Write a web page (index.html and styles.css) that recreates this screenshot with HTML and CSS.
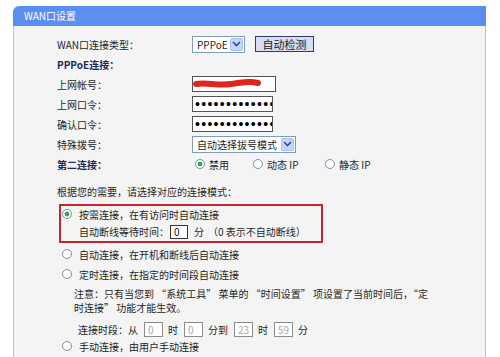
FILE: index.html
```html
<!DOCTYPE html>
<html lang="zh-CN">
<head>
    <meta charset="UTF-8">
    <meta name="viewport" content="width=device-width, initial-scale=1.0">
    <link rel="stylesheet" href="styles.css">
    <title>WAN口设置</title>
</head>
<body>
    <div class="panel">
        <div class="panel-title">WAN口设置</div>
        <div class="panel-body">
            <div class="row">
                <span class="label">WAN口连接类型：</span>
                <div class="select select-type">
                    <span class="select-text">PPPoE</span>
                    <span class="select-arrow"><svg width="9" height="6" viewBox="0 0 9 6"><polyline points="1,1 4.5,4.5 8,1" fill="none" stroke="#2b4da0" stroke-width="1.6"/></svg></span>
                </div>
                <button class="btn">自动检测</button>
            </div>
            <div class="row">
                <span class="label strong">PPPoE连接：</span>
            </div>
            <div class="row">
                <span class="label">上网帐号：</span>
                <span class="field field-account">
                    <svg width="70" height="10" viewBox="0 0 70 10"><path d="M3 5 C 14 3, 24 7, 38 5 S 58 2, 65 4" fill="none" stroke="#e0241f" stroke-width="6" stroke-linecap="round"/></svg>
                </span>
            </div>
            <div class="row">
                <span class="label">上网口令：</span>
                <input class="field field-pass" type="password" value="aaaaaaaaaaaaa">
            </div>
            <div class="row">
                <span class="label">确认口令：</span>
                <input class="field field-pass" type="password" value="aaaaaaaaaaaaa">
            </div>
            <div class="row">
                <span class="label">特殊拨号：</span>
                <div class="select select-dial">
                    <span class="select-text">自动选择拔号模式</span>
                    <span class="select-arrow"><svg width="9" height="6" viewBox="0 0 9 6"><polyline points="1,1 4.5,4.5 8,1" fill="none" stroke="#2b4da0" stroke-width="1.6"/></svg></span>
                </div>
            </div>
            <div class="row">
                <span class="label strong">第二连接：</span>
                <span class="choice choice-off"><span class="radio checked"></span>禁用</span>
                <span class="choice choice-dyn"><span class="radio"></span>动态 IP</span>
                <span class="choice"><span class="radio"></span>静态 IP</span>
            </div>

            <div class="hint">根据您的需要，请选择对应的连接模式：</div>
            <div class="mode-box">
                <div class="mode"><span class="radio checked"></span>按需连接，在有访问时自动连接</div>
                <div class="mode-sub">自动断线等待时间：<input class="num num-dark" value="0"><span class="unit">分</span>（0 表示不自动断线）</div>
            </div>
            <div class="mode mode-first"><span class="radio"></span>自动连接，在开机和断线后自动连接</div>
            <div class="mode"><span class="radio"></span>定时连接，在指定的时间段自动连接</div>
            <div class="note">注意：只有当您到 “系统工具” 菜单的 “时间设置” 项设置了当前时间后，“定<br>时连接” 功能才能生效。</div>
            <div class="time-row">连接时段：从<input class="num" value="0">时<input class="num" value="0">分到<input class="num" value="23">时<input class="num" value="59">分</div>
            <div class="mode mode-last"><span class="radio"></span>手动连接，由用户手动连接</div>
        </div>
    </div>
</body>
</html>
```

FILE: styles.css
```css
body {
    margin: 0;
    background: #fff;
    font-family: "Noto Sans CJK SC", "DejaVu Sans", sans-serif;
    font-size: 10px;
    color: #1f1f24;
}

.panel {
    width: 473px;
    margin: 6px 0 0 13px;
}

.panel-title {
    height: 20px;
    line-height: 20px;
    padding-left: 11px;
    background: #5b8ef0;
    color: #fff;
    border-top-left-radius: 6px;
}

.panel-body {
    min-height: 340px;
    padding: 8px 0 0 43px;
    background: #f4f4f4;
    border-left: 1px solid #ddb996;
    border-right: 1px solid #ddb996;
}

.row {
    display: flex;
    align-items: center;
    height: 20px;
}

.label {
    width: 135px;
    flex: none;
}

.strong {
    font-weight: bold;
    color: #1c2a5c;
}

.select {
    display: flex;
    align-items: center;
    height: 17px;
    box-sizing: border-box;
    padding: 0 1px 0 4px;
    border: 1px solid #7f9db9;
    background: #fff;
}

.select-type {
    width: 53px;
}

.select-dial {
    width: 104px;
}

.select-text {
    flex: 1;
    white-space: nowrap;
}

.select-arrow {
    display: flex;
    align-items: center;
    justify-content: center;
    width: 13px;
    height: 13px;
    box-sizing: border-box;
    background: #c6d6fa;
    border: 1px solid #a9bff0;
    border-radius: 2px;
}

.btn {
    width: 59px;
    height: 16px;
    margin-left: 10px;
    padding: 0;
    border: 1px solid #2d3b6b;
    background: #d9ddf2;
    font-family: inherit;
    font-size: 11px;
    line-height: 14px;
    color: #222;
}

.field {
    height: 16px;
    box-sizing: border-box;
    margin: 0;
    border: 1px solid #555;
    background: #fff;
}

.field-account {
    display: flex;
    align-items: center;
    width: 84px;
}

.field-pass {
    width: 81px;
    padding: 0 0 0 2px;
    font-family: "Liberation Sans", sans-serif;
    font-size: 14px;
    letter-spacing: 1.3px;
    color: #000;
}

.choice {
    display: inline-flex;
    align-items: center;
    gap: 4px;
}

.choice-off {
    width: 58px;
    margin-left: 3px;
}

.choice-dyn {
    width: 72px;
}

.radio {
    display: inline-block;
    flex: none;
    width: 10px;
    height: 10px;
    box-sizing: border-box;
    border: 1px solid #7d8fa8;
    border-radius: 50%;
    background: #fff;
}

.radio.checked {
    background: radial-gradient(circle, #35a644 0, #35a644 2px, #fff 2.8px);
}

.hint {
    height: 20px;
    line-height: 20px;
    margin-top: 8px;
}

.mode-box {
    width: 264px;
    box-sizing: border-box;
    margin: 2px 0 0 2px;
    border: 2px solid #c1272d;
}

.mode {
    display: flex;
    align-items: center;
    height: 20px;
    padding-left: 5px;
}

.mode .radio {
    margin-right: 7px;
}

.mode-box .mode {
    height: 16px;
    padding-left: 1px;
}

.mode-first {
    margin-top: 1px;
}

.mode-sub {
    display: flex;
    align-items: center;
    height: 19px;
    padding-left: 18px;
    white-space: nowrap;
}

.num {
    width: 19px;
    height: 15px;
    box-sizing: border-box;
    margin: 0 5px 0 6px;
    padding: 0 0 0 3px;
    border: 1px solid #8c8c8c;
    background: #fff;
    font-family: inherit;
    font-size: 10px;
    color: #a8a8a8;
}

.num-dark {
    width: 18px;
    height: 14px;
    margin: 0 0 0 1px;
    border-color: #333;
    color: #111;
}

.unit {
    margin: 0 4px 0 6px;
}

.note {
    margin-top: 3px;
    padding-left: 17px;
    line-height: 14px;
    white-space: nowrap;
}

.time-row {
    display: flex;
    align-items: center;
    height: 18px;
    margin-top: 5px;
    padding-left: 21px;
}

.mode-last {
    height: 16px;
}
```
